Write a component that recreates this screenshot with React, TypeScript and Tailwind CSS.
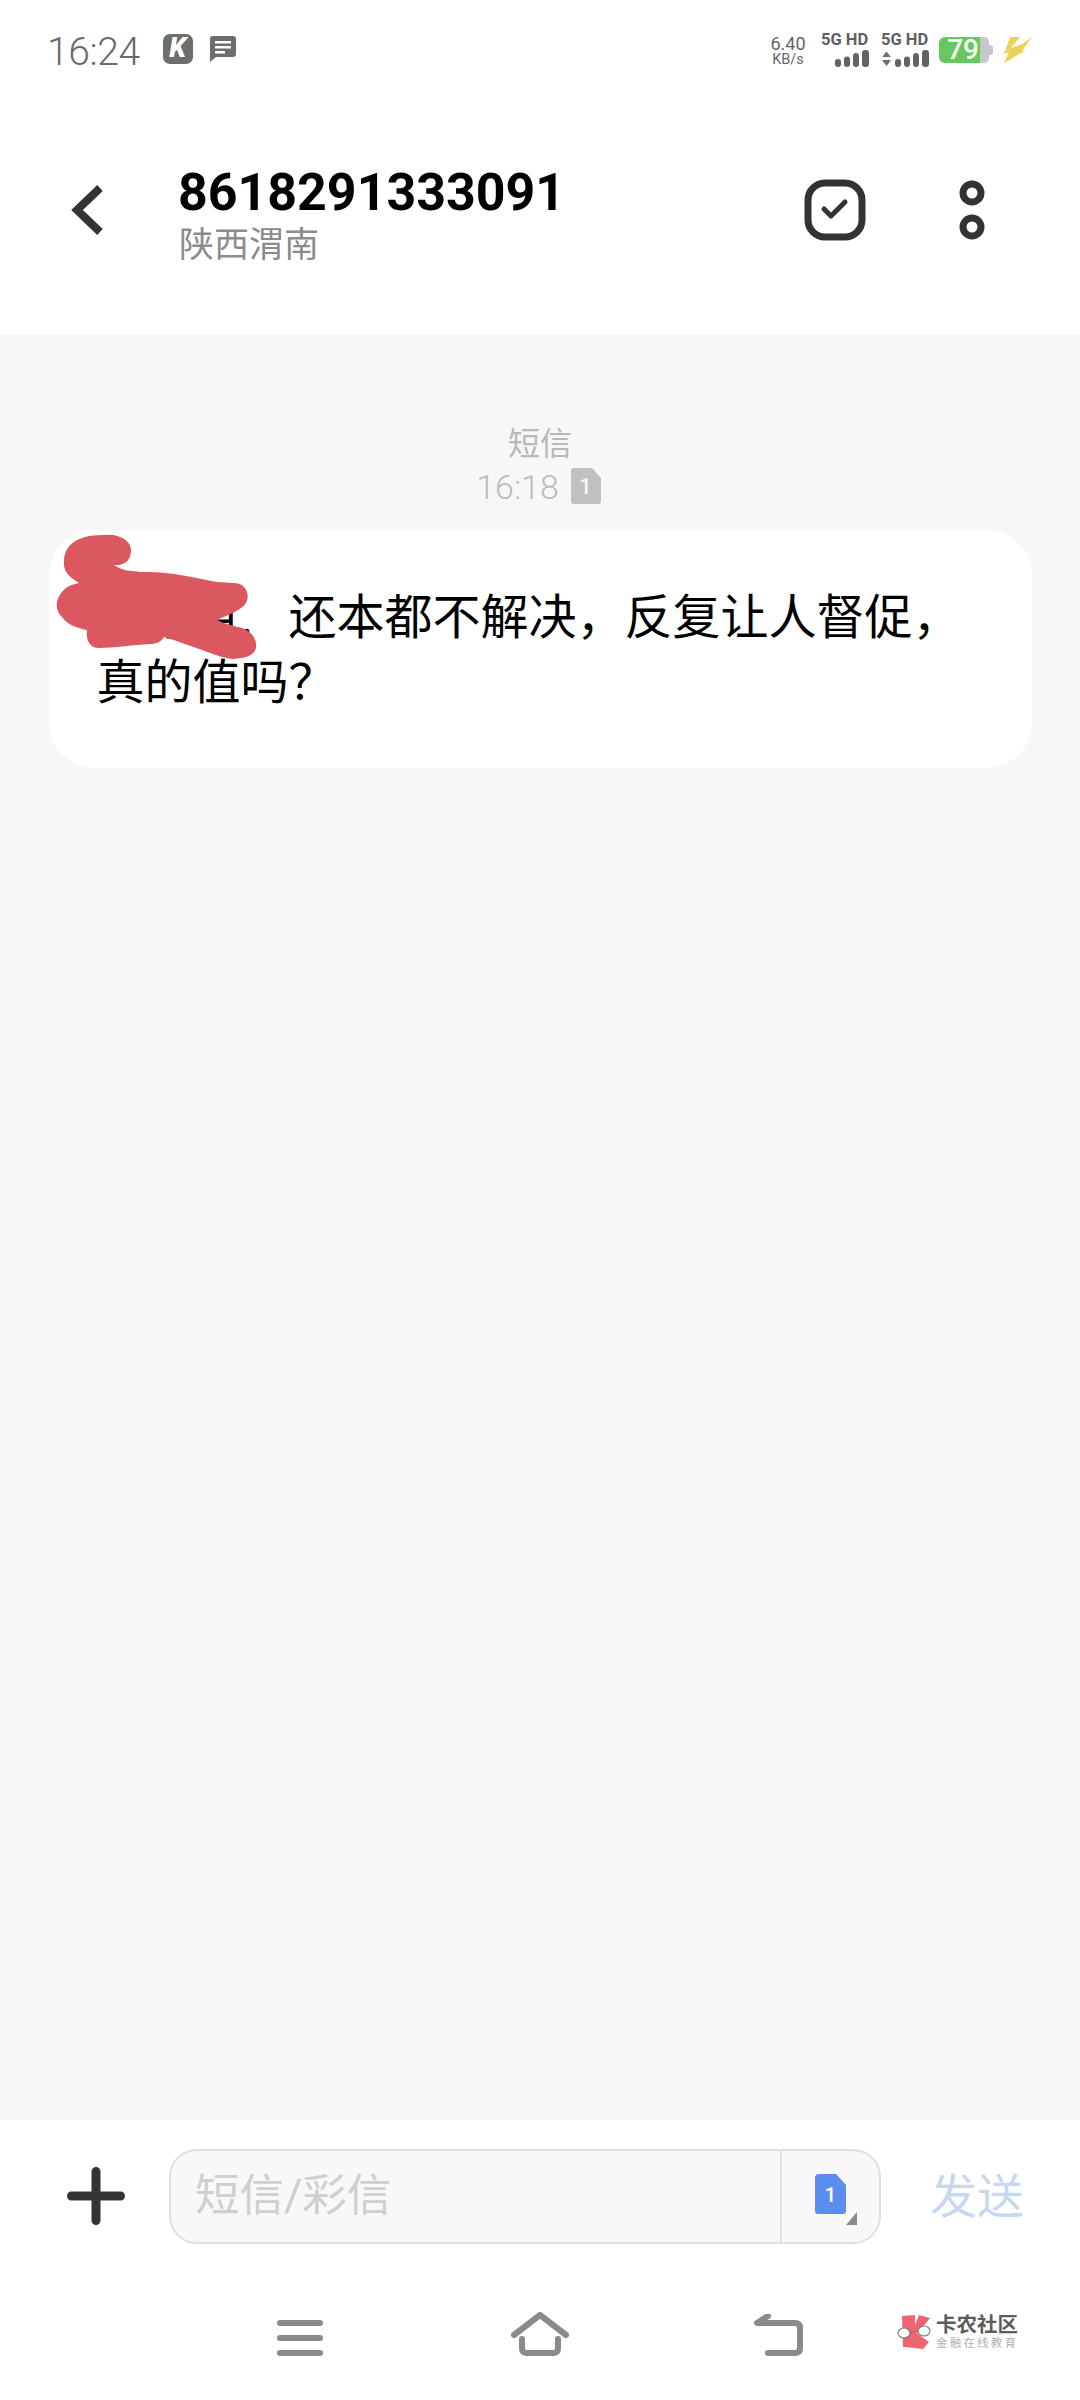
import React from 'react';

const FONT = "font-['Roboto','Noto_Sans_CJK_SC',sans-serif]";

const SignalBars: React.FC<{ arrows?: boolean }> = ({ arrows }) => (
  <svg width="48" height="18" viewBox="0 0 48 18" className="block mt-[2px]">
    {arrows && <path d="M1 7 L5.5 1.5 L10 7 Z M1 10 L10 10 L5.5 16 Z" fill="#6f6f6f" />}
    <rect x="14" y="9" width="6" height="8" rx="3" fill="#636363" />
    <rect x="23" y="6.5" width="6" height="10.5" rx="3" fill="#636363" />
    <rect x="32" y="3" width="6" height="14" rx="3" fill="#636363" />
    <rect x="41" y="0" width="7" height="17" rx="3" fill="#636363" />
  </svg>
);

const StatusBar = () => (
  <div className="h-[100px] shrink-0 flex items-center justify-between pl-[47px] pr-[48px]">
    <div className="flex items-center">
      <span className="text-[39px] leading-none text-[#6a6a6a] font-light tracking-[-0.4px] mt-[4px]">16:24</span>
      <div className="ml-[23px] w-[30px] h-[30px] rounded-[7px] bg-[#6d6d6d] flex items-center justify-center text-white text-[27px] leading-none font-black italic -mt-[3px]">
        K
      </div>
      <svg width="26" height="26" viewBox="0 0 26 26" className="ml-[17px] -mt-[3px]">
        <path d="M3 0 H23 Q26 0 26 3 V18 Q26 21 23 21 H6 L0 26 V3 Q0 0 3 0 Z" fill="#6d6d6d" />
        <rect x="5" y="5" width="16" height="2.5" fill="#fff" />
        <rect x="5" y="10" width="16" height="2.5" fill="#fff" />
        <rect x="5" y="15" width="10" height="2.5" fill="#fff" />
      </svg>
    </div>
    <div className="flex items-center">
      <div className="flex flex-col items-center text-[#666666] w-[40px] mt-[1px]">
        <span className="text-[18px] leading-[18px]">6.40</span>
        <span className="text-[14.5px] leading-[14px]">KB/s</span>
      </div>
      <div className="ml-[13px] w-[48px] flex flex-col">
        <span className="text-[16.5px] leading-[16px] font-bold text-[#5f5f5f] whitespace-nowrap">5G HD</span>
        <SignalBars />
      </div>
      <div className="ml-[12px] w-[48px] flex flex-col">
        <span className="text-[16.5px] leading-[16px] font-bold text-[#5f5f5f] whitespace-nowrap">5G HD</span>
        <SignalBars arrows />
      </div>
      <div className="ml-[10px] flex items-center">
        <div className="w-[41px] h-[26px] rounded-l-[6px] bg-[#67c85f] flex items-center justify-end pr-[1px] text-[#f2fff0] text-[28px] leading-none font-medium">
          79
        </div>
        <div className="w-[9px] h-[26px] rounded-r-[5px] bg-[#c6c6cb]" />
        <div className="w-[4px] h-[10px] rounded-r-[3px] bg-[#c6c6cb]" />
      </div>
      <svg width="30" height="26" viewBox="0 0 30 26" className="ml-[9px]">
        <path d="M8 0 H18 L9 11 L20 7 L30 0 L20 14 L13 15 L24 13 L2 26 L7 15 L2 17 Z" fill="#ecd259" />
      </svg>
    </div>
  </div>
);

const Header = () => (
  <div className="h-[235px] shrink-0 flex items-center pb-[16px]">
    <div className="w-[178px] shrink-0 pl-[70px]">
      <svg width="34" height="52" viewBox="0 0 34 52" className="block">
        <path d="M30 4 L7 26 L30 48" fill="none" stroke="#333333" strokeWidth="8" />
      </svg>
    </div>
    <div className="flex-1 flex flex-col mt-[11px]">
      <span className="text-[51.9px] leading-[62px] font-bold text-black">8618291333091</span>
      <span className="text-[35px] leading-[44px] text-[#8c8c8c] pl-[1px]">陕西渭南</span>
    </div>
    <svg width="62" height="62" viewBox="0 0 62 62" className="shrink-0 mr-[93px]">
      <rect x="4" y="4" width="54" height="54" rx="17" fill="none" stroke="#333333" strokeWidth="7" />
      <path d="M20 30 L27 37 L41 23" fill="none" stroke="#333333" strokeWidth="5" strokeLinecap="round" strokeLinejoin="round" />
    </svg>
    <svg width="26" height="60" viewBox="0 0 26 60" className="shrink-0 mr-[95px]">
      <circle cx="13" cy="13" r="9" fill="none" stroke="#333333" strokeWidth="7" />
      <circle cx="13" cy="47" r="9" fill="none" stroke="#333333" strokeWidth="7" />
    </svg>
  </div>
);

const Message = () => (
  <div className="flex-1 bg-[#f7f7f7] flex flex-col items-center pt-[89px]">
    <div className="text-[32px] leading-[40px] text-[#b9b9b9]">短信</div>
    <div className="flex items-center h-[44px] mt-[1px] pr-[3px] text-[#bcbcbc]">
      <span className="text-[34px] leading-none font-light">16:18</span>
      <svg width="30" height="36" viewBox="0 0 30 36" className="ml-[12px] -mt-[3px]">
        <path d="M3 0 H21 L30 10 V33 Q30 36 27 36 H3 Q0 36 0 33 V3 Q0 0 3 0 Z" fill="#c0c0c0" />
        <text x="14.5" y="26" textAnchor="middle" fontSize="22" fontWeight="500" fill="#f7f7f7">1</text>
      </svg>
    </div>
    <div className="relative w-[983px] h-[238px] mt-[21px] rounded-[45px] bg-white pl-[48px] pt-[55px] text-[48px] leading-[65px] text-black">
      <div className="whitespace-nowrap">某某目<span className="inline-block w-[48px]">.</span>还本都不解决，反复让人督促，</div>
      <div className="whitespace-nowrap">真的值吗？</div>
      {/* hand drawn redaction over the first characters */}
      <svg width="220" height="140" viewBox="48 530 220 140" className="absolute left-0 top-0">
        <path
          d="M102 535 C122 533 131 543 130 552 C129 562 122 566 113 565 C120 570 130 572 147 572 C170 572 195 578 216 582 C228 583 238 582 242 586 C249 592 248 603 240 608 C232 614 224 616 216 620 C224 624 233 626 241 628 C252 632 256 640 255 648 C253 656 244 658 232 659 C222 659 195 647 163 637 C160 642 155 644 150 644 C130 645 112 648 98 648 C88 648 85 640 86 630 C75 628 66 624 61 617 C53 610 54 597 65 588 C69 585 74 584 78 583 C66 576 62 570 63 560 C64 548 72 535 102 535 Z"
          fill="#dc5860"
        />
      </svg>
    </div>
  </div>
);

const InputBar = () => (
  <div className="h-[152px] shrink-0 flex items-center">
    <div className="w-[169px] shrink-0 pl-[67px]">
      <svg width="58" height="58" viewBox="0 0 58 58" className="block">
        <path d="M4.5 29 H53.5 M29 4.5 V53.5" stroke="#333333" strokeWidth="9" strokeLinecap="round" />
      </svg>
    </div>
    <div className="w-[712px] h-[95px] shrink-0 flex rounded-[28px] border-2 border-[#e0e0e0] bg-[#f8f8f8]">
      <div className="flex-1 flex items-center pl-[24px] text-[44.5px] leading-none text-[#cfcfcf]">短信/彩信</div>
      <div className="w-[99px] shrink-0 border-l-2 border-[#e0e0e0] pl-[33px] pt-[23px]">
        <svg width="43" height="52" viewBox="0 0 43 52" className="block">
          <path d="M4 0 H21 L31 11 V37 Q31 40 28 40 H3 Q0 40 0 37 V4 Q0 0 4 0 Z" fill="#5b8def" />
          <text x="15.5" y="28" textAnchor="middle" fontSize="20" fontWeight="500" fill="#ffffff">1</text>
          <path d="M42 38 V51 H31 Z" fill="#8a8a8a" />
        </svg>
      </div>
    </div>
    <div className="ml-[49px] text-[47px] leading-none text-[#c6d8f0] whitespace-nowrap">发送</div>
  </div>
);

const NavBar = () => (
  <div className="flex-1 flex items-start pt-[48px]">
    <svg width="46" height="36" viewBox="0 0 46 36" className="ml-[277px] shrink-0">
      <path d="M3 3 H43 M3 18 H43 M3 33 H43" stroke="#8a8a8a" strokeWidth="6" strokeLinecap="round" />
    </svg>
    <svg width="58" height="44" viewBox="0 0 58 44" className="ml-[188px] -mt-[8px] shrink-0">
      <path d="M3 23 L29 3 L55 23" fill="none" stroke="#8a8a8a" strokeWidth="6" strokeLinecap="round" strokeLinejoin="round" />
      <path d="M11 27 V36 Q11 41 16 41 H42 Q47 41 47 36 V27" fill="none" stroke="#8a8a8a" strokeWidth="6" strokeLinecap="round" />
    </svg>
    <svg width="50" height="44" viewBox="0 0 50 44" className="ml-[185px] -mt-[6px] shrink-0">
      <path d="M14 2 L3 9 H41 Q46 9 46 14 V34 Q46 39 41 39 H14" fill="none" stroke="#8a8a8a" strokeWidth="6" strokeLinecap="round" strokeLinejoin="round" />
    </svg>
    <div className="ml-[93px] -mt-[6px] flex items-start shrink-0">
      <svg width="36" height="36" viewBox="0 0 36 36" className="shrink-0">
        <path d="M5 2 L18 1 L19 34 L6 33 Z" fill="#ee6470" />
        <path d="M22 1 L33 4 L20 20 L17 14 Z" fill="#ee6470" />
        <path d="M18 18 L32 28 L26 35 L18 34 Z" fill="#ee6470" />
        <ellipse cx="7" cy="19" rx="6" ry="5" fill="#ffffff" stroke="#777777" strokeWidth="1.1" />
        <ellipse cx="27" cy="17" rx="6" ry="5" fill="#ffffff" stroke="#777777" strokeWidth="1.1" />
        <path d="M13 18 L21 17" stroke="#777777" strokeWidth="1.1" />
      </svg>
      <div className="ml-[3px] mt-[1px] flex flex-col">
        <span className="text-[20.5px] leading-[20px] font-bold text-[#5c5c5c] whitespace-nowrap">卡农社区</span>
        <span className="text-[11.5px] leading-[14px] mt-[1px] text-[#b0b0b0] tracking-[2.2px] whitespace-nowrap">金融在线教育</span>
      </div>
    </div>
  </div>
);

export default function App() {
  return (
    <div className={`w-[1080px] h-[2400px] flex flex-col bg-white overflow-hidden ${FONT}`}>
      <StatusBar />
      <Header />
      <Message />
      <div className="h-[280px] shrink-0 flex flex-col">
        <InputBar />
        <NavBar />
      </div>
    </div>
  );
}
